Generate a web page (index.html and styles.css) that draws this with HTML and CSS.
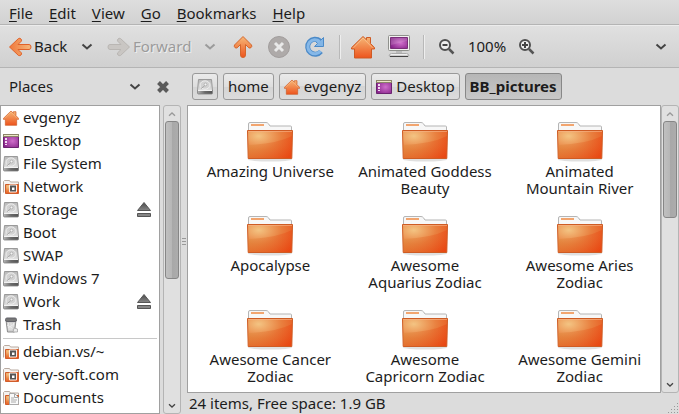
FILE: index.html
```html
<!DOCTYPE html>
<html lang="en">
<head>
<meta charset="utf-8">
<title>BB_pictures</title>
<link rel="stylesheet" href="styles.css">
</head>
<body>
<svg class="defs" width="0" height="0" aria-hidden="true">
  <defs>
    <linearGradient id="orange" x1="0" y1="0" x2="0" y2="1"><stop offset="0" stop-color="#f6b878"/><stop offset="1" stop-color="#ed541d"/></linearGradient>
    <linearGradient id="arrow" x1="0" y1="0" x2="1" y2="0"><stop offset="0" stop-color="#f0783c"/><stop offset="1" stop-color="#f5b87c"/></linearGradient>
    <radialGradient id="folderFace" cx=".25" cy=".2" r="1"><stop offset="0" stop-color="#f3c483"/><stop offset=".5" stop-color="#e9803f"/><stop offset="1" stop-color="#e84a14"/></radialGradient>
    <linearGradient id="folderLow" x1="0" y1="0" x2="1" y2="0"><stop offset="0" stop-color="#dd8a3c"/><stop offset=".6" stop-color="#e56225"/><stop offset="1" stop-color="#ea4210"/></linearGradient>
    <radialGradient id="purple" cx=".6" cy=".5" r=".7"><stop offset="0" stop-color="#cf6fcb"/><stop offset="1" stop-color="#832086"/></radialGradient>
    <linearGradient id="metal" x1="0" y1="0" x2="0" y2="1"><stop offset="0" stop-color="#b8b8b8"/><stop offset="1" stop-color="#e0e0e0"/></linearGradient>
    <linearGradient id="edge" x1="0" y1="0" x2="1" y2="0"><stop offset="0" stop-color="#b4b4b4"/><stop offset=".5" stop-color="#6a6a6a"/><stop offset="1" stop-color="#555"/></linearGradient>
    <linearGradient id="dark" x1="0" y1="0" x2="0" y2="1"><stop offset="0" stop-color="#4c4c4c"/><stop offset="1" stop-color="#858585"/></linearGradient>
    <symbol id="house" viewBox="0 0 24 24">
      <path d="M12 1.500 15.500 4.800V2.500h4v6l4 4.200V14h-3v9H3.500v-9h-3v-1.300Z" fill="url(#orange)" stroke="#ce5a24"/>
      <path d="M2.500 12.800 12 3l9.500 9.800" fill="none" stroke="#fbd0a0" opacity=".6"/>
    </symbol>
    <symbol id="desk" viewBox="0 0 16 16">
      <path d="M.5 1.500h15v13H.5Z" fill="url(#purple)" stroke="#6b2470"/>
      <path d="M0 1h16v3H0Z" fill="#8b8468"/><path d="M1 2h14v1H1Z" fill="#ece7c6"/>
      <path d="M2 5h2v2H2Zm0 3h2v2H2Zm0 3h2v1H2Z" fill="#f2dcf2"/>
    </symbol>
    <symbol id="disk" viewBox="0 0 16 16">
      <path d="M1.500.5h13L15.500 11.500H.5Z" fill="url(#metal)" stroke="#9a9a9a"/>
      <ellipse cx="8" cy="6" rx="5" ry="4.200" fill="#d2d2d2" stroke="#f4f4f4" stroke-width=".8"/>
      <circle cx="8.500" cy="5.500" r="1.400" fill="#f4f4f4" stroke="#999" stroke-width=".6"/>
      <path d="m4 9.500 3.500-2.500" stroke="#999" stroke-width=".8"/>
      <path d="M.5 11.500h15V14q0 1-1 1h-13q-1 0-1-1Z" fill="url(#edge)" stroke="#808080" stroke-width=".8"/>
      <path d="M1 11.500h14" stroke="#f2f2f2"/>
    </symbol>
    <symbol id="remote" viewBox="0 0 16 16">
      <path d="M.5 13.500V2.500l1-1h5l1 1.500h8v4" fill="#f5f2ef" stroke="#b9aaa0"/>
      <path d="M2.500 5.500h13v9h-13Z" fill="url(#folderFace)" stroke="#d05d2b"/>
      <path d="M6.500 6h7v7h-7Z" fill="#555" stroke="#fbeee6"/>
      <path d="M9 8.500h2.500v2.500H9Z" fill="#fff"/>
    </symbol>
    <symbol id="docs" viewBox="0 0 16 16">
      <path d="M.5 13.500V2.500l1-1h5l1 1.500h8v4" fill="#f5f2ef" stroke="#b9aaa0"/>
      <path d="M2.500 5.500h13v9h-13Z" fill="url(#folderFace)" stroke="#d05d2b"/>
      <path d="M6.500 3.500h5l4 4v7h-9Z" fill="#fafafa" stroke="#aaa"/><path d="M11.500 3.500v4h4M8 8h3M8 10h6M8 12h5" fill="none" stroke="#aaa"/>
    </symbol>
    <symbol id="bin" viewBox="0 0 16 16">
      <path d="M3 3h10l-1.500 12h-7Z" fill="#d0d0d0" stroke="#8c8c8c"/>
      <path d="M5.500 6l.7 7M8 6v7m2.500-7-.5 4M4 8l7 4M11 7l-6 4" stroke="#f0f0f0" stroke-width=".8" fill="none"/>
      <rect x="2.500" y="1" width="11" height="3.500" rx="1.500" fill="#777" stroke="#626269"/>
      <path d="m11 11 3.500 1v3H10Z" fill="#ececec" stroke="#999" stroke-width=".7"/>
    </symbol>
    <symbol id="folder" viewBox="0 0 48 44">
      <ellipse cx="24" cy="40.500" rx="22" ry="2" fill="#000" opacity=".12"/>
      <path d="M2.500 14V5q0-1.500 1.500-1.500h16q1.500 0 2.500 1.300L24 7h20.500q1 0 1 1v6Z" fill="#f7f7f7" stroke="#b5b5b5"/>
      <rect x="5" y="5" width="13" height="2" fill="#f2a56f"/>
      <path d="M1.500 11.500h45l-.7 28H2.200Z" fill="url(#folderFace)" stroke="#ce5c24"/>
      <path d="M2 26Q30 25 46 17l-.7 22H2.700Z" fill="url(#folderLow)" opacity=".4"/>
      <path d="M2 12.500h44" stroke="#f8b68b" opacity=".6"/>
    </symbol>
    <symbol id="chev" viewBox="0 0 12 8"><path d="m1.500 1.500 4.500 4 4.500-4" fill="none" stroke="currentColor" stroke-width="2"/></symbol>
    <symbol id="arrowShape" viewBox="0 0 24 20"><path d="M1.500 10 10.500 1.500q1.500-.7 2.500.5t.3 2.200L10 7.500h11q2 0 2 2.500t-2 2.500H10l3.300 3.300q.7 1.200-.3 2.200t-2.500.5Z"/></symbol>
    <symbol id="eject" viewBox="0 0 16 16"><path d="M8 .5 14.500 8.500h-13Z" fill="url(#dark)" stroke="#555"/><path d="M1.500 11.500h13v3h-13Z" fill="#858585" stroke="#555"/></symbol>
  </defs>
</svg>

<nav class="menubar" aria-label="Menu">
  <button><u>F</u>ile</button><button><u>E</u>dit</button><button><u>V</u>iew</button><button><u>G</u>o</button><button><u>B</u>ookmarks</button><button><u>H</u>elp</button>
</nav>

<div class="toolbar" role="toolbar" aria-label="Navigation">
  <button class="nav-btn nav-back"><svg class="arrow arrow-on"><use href="#arrowShape"/></svg>Back</button>
  <button class="drop" aria-label="Back history"><svg class="chev"><use href="#chev"/></svg></button>
  <button class="nav-btn nav-forward" disabled><svg class="arrow arrow-off"><use href="#arrowShape"/></svg>Forward</button>
  <button class="drop drop-off" aria-label="Forward history" disabled><svg class="chev"><use href="#chev"/></svg></button>
  <button class="tool" aria-label="Up"><svg width="20" height="24" viewBox="0 0 20 24"><path d="M10 1.500 18.500 10q.8 1.500-.4 2.500t-2.300.3L12.500 9.500V20q0 2.500-2.500 2.500T7.500 20V9.500l-3.300 3.300q-1.200.7-2.300-.3t-.4-2.500Z" fill="url(#orange)" stroke="#d4662c"/></svg></button>
  <button class="tool" aria-label="Stop" disabled><svg width="22" height="22" viewBox="0 0 22 22"><circle cx="11" cy="11" r="10.500" fill="#aeaaa9" stroke="#a19d9c"/><path d="m7 7 8 8m0-8-8 8" stroke="#e9e9e9" stroke-width="3"/></svg></button>
  <button class="tool" aria-label="Reload"><svg width="22" height="22" viewBox="0 0 22 22"><path d="M17 15.500A7.500 7.500 0 1 1 16 5" fill="none" stroke="#4b8ac8" stroke-width="5"/><path d="M19.500 1.500v9h-9l3-3-2-2 3-2 2 1Z" fill="#82b5e6" stroke="#4b8ac8"/><path d="M16.500 15A7 7 0 1 1 15.500 5.500" fill="none" stroke="#86b8e8" stroke-width="3"/></svg></button>
  <span class="divider"></span>
  <button class="tool" aria-label="Home"><svg width="24" height="24"><use href="#house"/></svg></button>
  <button class="tool" aria-label="Computer"><svg width="22" height="23" viewBox="0 0 22 23"><rect x=".5" y=".5" width="21" height="15" rx="1" fill="#f2f2f0" stroke="#8f918c"/><path d="M2.500 2.500h17v11h-17Z" fill="url(#purple)" stroke="#7a2f7a"/><path d="M3 3h16v3L3 10Z" fill="#fff" opacity=".15"/><path d="M8 16h6v2H8Z" fill="#bbb"/><path d="M3.500 18.500h15q2 0 2.500 2.500H1q.5-2.500 2.500-2.500Z" fill="#f0f0f0" stroke="#aaa"/><path d="M2 21.500h18" stroke="#444"/></svg></button>
  <span class="divider"></span>
  <button class="tool" aria-label="Zoom out"><svg width="18" height="18" viewBox="0 0 18 18"><circle cx="7" cy="7" r="5" fill="#eee" stroke="#505050" stroke-width="2"/><path d="M4.500 7h5" stroke="#444" stroke-width="2"/><path d="m11 11 4.500 4.500" stroke="#555" stroke-width="2.500"/></svg></button>
  <output class="zoom">100%</output>
  <button class="tool" aria-label="Zoom in"><svg width="18" height="18" viewBox="0 0 18 18"><circle cx="7" cy="7" r="5" fill="#eee" stroke="#505050" stroke-width="2"/><path d="M4 7h6M7 4v6" stroke="#444" stroke-width="2"/><path d="m11 11 4.500 4.500" stroke="#555" stroke-width="2.500"/></svg></button>
  <button class="drop drop-end" aria-label="More"><svg class="chev"><use href="#chev"/></svg></button>
</div>

<div class="panes">
  <aside class="side">
    <header class="side-head">
      <button class="side-title">Places<svg class="chev"><use href="#chev"/></svg></button>
      <button class="close" aria-label="Close"><svg width="14" height="14" viewBox="0 0 14 14"><path d="m2.500 2.500 9 9m0-9-9 9" stroke="#5a5a5a" stroke-width="4"/></svg></button>
    </header>
    <div class="scroller">
      <ul class="places">
        <li><svg><use href="#house"/></svg>evgenyz</li>
        <li><svg><use href="#desk"/></svg>Desktop</li>
        <li><svg><use href="#disk"/></svg>File System</li>
        <li><svg><use href="#remote"/></svg>Network</li>
        <li><svg><use href="#disk"/></svg>Storage<button class="eject" aria-label="Eject Storage"><svg><use href="#eject"/></svg></button></li>
        <li><svg><use href="#disk"/></svg>Boot</li>
        <li><svg><use href="#disk"/></svg>SWAP</li>
        <li><svg><use href="#disk"/></svg>Windows 7</li>
        <li><svg><use href="#disk"/></svg>Work<button class="eject" aria-label="Eject Work"><svg><use href="#eject"/></svg></button></li>
        <li><svg><use href="#bin"/></svg>Trash</li>
        <li class="rule" role="separator"></li>
        <li><svg><use href="#remote"/></svg>debian.vs/~</li>
        <li><svg><use href="#remote"/></svg>very-soft.com</li>
        <li><svg><use href="#docs"/></svg>Documents</li>
      </ul>
      <div class="bar">
        <button class="bar-up" aria-label="Scroll up"><svg><use href="#chev"/></svg></button>
        <div class="track"><div class="thumb thumb-side"></div></div>
        <button class="bar-down" aria-label="Scroll down"><svg><use href="#chev"/></svg></button>
      </div>
    </div>
  </aside>
  <div class="grip"><i></i><i></i><i></i></div>
  <main class="main">
    <nav class="path" aria-label="Path">
      <button class="crumb" aria-label="File System"><svg><use href="#disk"/></svg></button>
      <button class="crumb">home</button>
      <button class="crumb"><svg><use href="#house"/></svg>evgenyz</button>
      <button class="crumb"><svg><use href="#desk"/></svg>Desktop</button>
      <button class="crumb crumb-on">BB_pictures</button>
    </nav>
    <div class="scroller">
      <div class="view">
        <figure><svg><use href="#folder"/></svg><figcaption>Amazing Universe</figcaption></figure>
        <figure><svg><use href="#folder"/></svg><figcaption>Animated Goddess<br>Beauty</figcaption></figure>
        <figure><svg><use href="#folder"/></svg><figcaption>Animated<br>Mountain River</figcaption></figure>
        <figure><svg><use href="#folder"/></svg><figcaption>Apocalypse</figcaption></figure>
        <figure><svg><use href="#folder"/></svg><figcaption>Awesome<br>Aquarius Zodiac</figcaption></figure>
        <figure><svg><use href="#folder"/></svg><figcaption>Awesome Aries<br>Zodiac</figcaption></figure>
        <figure><svg><use href="#folder"/></svg><figcaption>Awesome Cancer<br>Zodiac</figcaption></figure>
        <figure><svg><use href="#folder"/></svg><figcaption>Awesome<br>Capricorn Zodiac</figcaption></figure>
        <figure><svg><use href="#folder"/></svg><figcaption>Awesome Gemini<br>Zodiac</figcaption></figure>
      </div>
      <div class="bar">
        <button class="bar-up" aria-label="Scroll up"><svg><use href="#chev"/></svg></button>
        <div class="track"><div class="thumb thumb-main"></div></div>
        <button class="bar-down" aria-label="Scroll down"><svg><use href="#chev"/></svg></button>
      </div>
    </div>
    <footer class="status">24 items, Free space: 1.9 GB
      <svg width="12" height="12" viewBox="0 0 12 12"><path d="M10 1h1v1h-1zM7 4h1v1H7zM10 4h1v1h-1zM4 7h1v1H4zM7 7h1v1H7zM10 7h1v1h-1zM1 10h1v1H1zM4 10h1v1H4zM7 10h1v1H7zM10 10h1v1h-1z" fill="#999"/></svg>
    </footer>
  </main>
</div>
</body>
</html>
```
FILE: styles.css
```css
* { box-sizing: border-box; }
body {
  margin: 0;
  height: 100vh;
  overflow: hidden;
  display: flex;
  flex-direction: column;
  background: #dcdcdc;
  color: #1c1c1c;
  font: 15px/17px "Noto Sans", "Open Sans", sans-serif;
}
button {
  font: inherit;
  color: inherit;
  background: none;
  border: 0;
  padding: 0;
  display: flex;
  align-items: center;
  white-space: nowrap;
}
svg { display: block; flex: none; }
.defs { position: absolute; }
u { text-decoration-thickness: 1px; text-underline-offset: 2px; }
.chev { width: 12px; height: 8px; color: #444; }

.menubar {
  flex: none;
  display: flex;
  gap: 16px;
  height: 25px;
  padding: 2px 9px 0;
  background: linear-gradient(#dedede, #d2d2d2);
  border-bottom: 1px solid #b4b4b4;
}

.toolbar {
  flex: none;
  display: flex;
  align-items: center;
  height: 43px;
  padding: 0 12px 0 8px;
  background: linear-gradient(#e0e0e0, #d0d0d0);
  border-top: 1px solid #ececec;
  border-bottom: 1px solid #b4b4b4;
}
.nav-btn { gap: 2px; }
.nav-back { width: 73px; }
.nav-forward { width: 97px; }
.arrow { width: 24px; height: 20px; }
.arrow-on { fill: url(#arrow); stroke: #e0622a; }
.arrow-off { fill: #c9c6c3; stroke: #b9b6b3; transform: scaleX(-1); }
.nav-forward, .drop-off .chev { color: #9b9b9b; text-shadow: 1px 1px #eee; }
.drop { width: 26px; }
.drop-end { width: 12px; margin-left: auto; }
.tool { width: 36px; justify-content: center; }
.drop-off { width: 21px; }
.divider { width: 2px; height: 24px; margin: 0 4px 0 6px; border-left: 1px solid #b8b8b8; border-right: 1px solid #eee; }
.zoom { width: 44px; text-align: center; }

.panes { flex: 1; min-height: 0; display: flex; }
.side { flex: none; width: 181px; display: flex; flex-direction: column; }
.side-head { flex: none; height: 37px; padding: 0 11px 0 9px; display: flex; align-items: center; gap: 15px; }
.side-title { flex: 1; justify-content: space-between; }
.scroller { flex: 1; min-height: 0; display: flex; }
.places {
  flex: 1;
  margin: 0 3px 0 0;
  padding: 0 2px;
  list-style: none;
  background: #fff;
  border: 1px solid #a0a0a0;
  overflow: hidden;
}
.places li { display: flex; align-items: center; gap: 4px; height: 23px; }
.places svg { width: 16px; height: 16px; }
.places .rule { height: 1px; margin: 2px 0 1px; background: #c8c8c8; }
.eject { margin: 0 5px 0 auto; }

.bar {
  flex: none;
  width: 18px;
  display: flex;
  flex-direction: column;
  align-items: center;
  background: #e0e0e0;
  border: 1px solid #b4b4b4;
  border-radius: 3px;
}
.bar button { height: 15px; }
.bar svg { width: 8px; height: 6px; color: #444; }
.bar-up svg { transform: rotate(180deg); color: #999; }
.track { flex: 1; width: 14px; }
.thumb {
  border: 1px solid #868686;
  border-radius: 3px;
  background: linear-gradient(90deg, #c0c0c0, #b6b6b6 50%, #a8a8a8 50%, #acacac);
}
.thumb-side { height: 57%; }
.thumb-main { height: 38%; }

.grip { flex: none; width: 6px; display: flex; flex-direction: column; justify-content: center; align-items: center; gap: 2px; }
.grip i { width: 4px; height: 1px; background: #999; }

.main { flex: 1; min-width: 0; display: flex; flex-direction: column; }
.path { flex: none; height: 37px; padding: 0 5px; display: flex; align-items: center; gap: 5px; }
.crumb {
  height: 27px;
  gap: 4px;
  padding: 0 4px;
  border: 1px solid #999;
  border-radius: 3px;
  background: linear-gradient(#eaeaea, #dedede 50%, #d4d4d4 50%, #dcdcdc);
}
.crumb svg { width: 16px; height: 16px; }
.crumb-on { font-weight: 700; background: linear-gradient(#b6b6b6, #c8c8c8); border-color: #888; }
.view {
  flex: 1;
  display: grid;
  grid-template-columns: repeat(3, 1fr);
  grid-auto-rows: 94px;
  padding: 0 3px 0 5px;
  background: #fff;
  border: 1px solid #a0a0a0;
  overflow: hidden;
}
figure { margin: 0; padding-top: 13px; text-align: center; }
figure svg { width: 48px; height: 44px; margin: 0 auto; }
.status { flex: none; height: 21px; padding-left: 2px; display: flex; justify-content: space-between; align-items: center; }
.status svg { align-self: flex-end; }
```
